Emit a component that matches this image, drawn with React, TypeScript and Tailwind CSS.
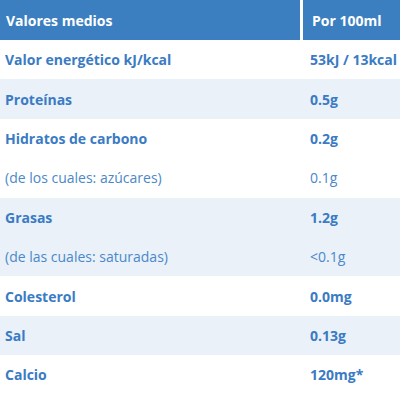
import React from 'react';

interface Row {
  label: string;
  value: string;
  sub?: boolean;
  shaded?: boolean;
}

const rows: Row[] = [
  { label: 'Valor energético kJ/kcal', value: '53kJ / 13kcal' },
  { label: 'Proteínas', value: '0.5g', shaded: true },
  { label: 'Hidratos de carbono', value: '0.2g' },
  { label: '(de los cuales: azúcares)', value: '0.1g', sub: true },
  { label: 'Grasas', value: '1.2g', shaded: true },
  { label: '(de las cuales: saturadas)', value: '<0.1g', sub: true, shaded: true },
  { label: 'Colesterol', value: '0.0mg' },
  { label: 'Sal', value: '0.13g', shaded: true },
  { label: 'Calcio', value: '120mg*' },
];

export default function App() {
  return (
    <div className="w-[400px] h-[400px] bg-white overflow-hidden" style={{ fontFamily: '"Open Sans", sans-serif' }}>
      {/* Header */}
      <div className="flex h-[40px] gap-[3px] text-white font-bold text-[14px]">
        <div className="w-[300px] bg-[#3c7fc0] flex items-center pl-[6px]">Valores medios</div>
        <div className="flex-1 bg-[#3c7fc0] flex items-center pl-[9px]">Por 100ml</div>
      </div>

      {/* Body */}
      {rows.map((row) => (
        <div
          key={row.label}
          className={`flex h-[39.4px] items-center text-[14px] ${
            row.shaded ? 'bg-[#eaf1f9]' : 'bg-white'
          } ${row.sub ? 'font-normal text-[#4a88c9]' : 'font-bold text-[#3a7bc4]'}`}
        >
          <div className="w-[303px] pl-[5px]">{row.label}</div>
          <div className="flex-1 pl-[7px]">{row.value}</div>
        </div>
      ))}
    </div>
  );
}
